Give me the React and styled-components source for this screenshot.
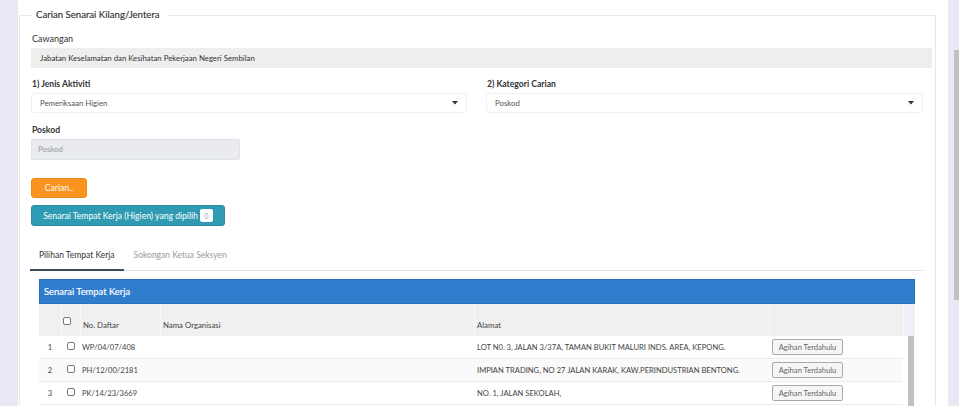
import styled, { createGlobalStyle } from "styled-components";

const GlobalStyle = createGlobalStyle`
    * { box-sizing: border-box; }
    body {
        margin: 0;
        background: #e8e9f5;
        font-family: Lato, "Noto Sans", sans-serif;
        color: #333;
    }
`;

const Page = styled.div`
    display: flex;
    height: 406px;
    overflow: hidden;
`;
const Card = styled.main`
    margin-left: 18px;
    width: 930px;
    background: #fff;
    padding-top: 8px;
`;
const PageRail = styled.div`
    flex: 1;
    display: flex;
    justify-content: flex-end;
`;
const PageThumb = styled.div`
    width: 5px;
    height: 250px;
    margin-top: 50px;
    background: #c1c1c1;
`;
const Fieldset = styled.fieldset`
    margin: 0 0 0 1px;
    width: 917px;
    min-width: 0;
    border: 1px solid #e9e9e9;
    padding: 0 2px 0 11px;
`;
const Legend = styled.legend`
    margin-left: 1px;
    padding: 0 7px 0 4px;
    font-size: 9.6px;
    line-height: 14px;
    color: #333;
    -webkit-text-stroke: 0.15px #333;
`;
const Label = styled.div`
    font-size: ${p => p.$bold ? 8.6 : 9}px;
    line-height: 12px;
    font-weight: ${p => p.$bold ? 700 : 400};
    color: #333;
    margin: ${p => p.$top || 0}px 0 3px 1px;
`;
const ReadOnly = styled.div`
    width: 901px;
    height: 20px;
    background: #eeeeee;
    font-size: 7.8px;
    line-height: 20px;
    padding-left: 9px;
    color: #333;
`;
const Row = styled.div`
    display: flex;
    gap: 19px;
`;
const Col = styled.div`
    width: ${p => p.$w}px;
`;
const Select = styled.div`
    height: 20px;
    border: 1px solid #f0f0f0;
    border-radius: 3px;
    display: flex;
    align-items: center;
    justify-content: space-between;
    padding: 0 8px 0 8px;
    font-size: 7.8px;
    color: #555;
    background: #fff;
`;
const PostInput = styled.div`
    width: 209px;
    height: 21px;
    background: #e9ebee;
    border: 1px solid #dfe2e6;
    border-radius: 2px;
    font-size: 7.8px;
    line-height: 19px;
    padding-left: 6px;
    color: #9a9a9a;
`;
const Button = styled.div`
    display: inline-flex;
    align-items: center;
    justify-content: center;
    gap: 2px;
    height: ${p => p.$h}px;
    width: ${p => p.$w}px;
    margin-top: ${p => p.$top}px;
    background: ${p => p.$bg};
    border: 1px solid ${p => p.$border};
    border-radius: 3px;
    color: #fff;
    font-size: 8.6px;
`;
const Stack = styled.div`
    display: flex;
    flex-direction: column;
    align-items: flex-start;
`;
const Badge = styled.span`
    background: #fff;
    color: #8aaab8;
    font-size: 7px;
    width: 13px;
    height: 13px;
    border-radius: 2px;
    display: inline-flex;
    align-items: center;
    justify-content: center;
`;
const Tabs = styled.div`
    display: flex;
    width: 893px;
    margin: 15px 0 0 -1px;
    border-bottom: 1px solid #e3e3e3;
`;
const Tab = styled.div`
    padding: 8px 9px 7px ${p => p.$active ? 9 : 10}px;
    font-size: 8.5px;
    line-height: 13px;
    color: ${p => p.$active ? "#333" : "#9a9a9a"};
    border-bottom: 2px solid ${p => p.$active ? "#3b4a5c" : "transparent"};
    margin-bottom: -1px;
`;
const Panel = styled.section`
    margin: 8px 0 0 8px;
    width: 876px;
`;
const PanelHead = styled.div`
    height: 25px;
    background: #2f7dcd;
    border: 1px solid #2a70bd;
    color: #fff;
    font-size: 9.4px;
    line-height: 23px;
    padding-left: 4px;
    -webkit-text-stroke: 0.15px #fff;
`;
const Grid = styled.div`
    display: grid;
    grid-template-columns: 22px 19px 80px 314px 295px 134px ${p => p.$gutter ? "12px" : ""};
`;
const HeadRow = styled(Grid)`
    height: 32px;
    background: #f0f0f0;
`;
const HeadCell = styled.div`
    border-left: 1px solid ${p => p.$first ? "transparent" : "#f8f8f8"};
    font-size: 7.8px;
    color: #444;
    padding: ${p => p.$check ? "13px 0 0 1px" : "0 0 6px 2px"};
    display: flex;
    align-items: ${p => p.$check ? "flex-start" : "flex-end"};
    background: ${p => p.$gutter ? "#eef2f7" : "transparent"};
`;
const Body = styled.div`
    display: flex;
`;
const Rows = styled.div`
    width: 864px;
`;
const BodyRow = styled(Grid)`
    height: 23px;
    align-items: center;
    border-bottom: 1px solid #ececec;
    background: ${p => p.$striped ? "#fafafa" : "#fff"};
    font-size: 7.6px;
    color: #444;
`;
const Cell = styled.div`
    padding-left: ${p => p.$pad ?? 3}px;
    text-align: ${p => p.$center ? "center" : "left"};
    white-space: nowrap;
`;
const Check = styled.span`
    display: inline-block;
    width: 8px;
    height: 8px;
    border: 1px solid #777;
    border-radius: 2px;
    background: #fff;
`;
const RowButton = styled.div`
    width: 71px;
    height: 16px;
    margin-left: 3px;
    border: 1px solid #a9a9a9;
    border-radius: 2px;
    background: #f6f6f6;
    color: #666;
    font-size: 7.6px;
    line-height: 14px;
    text-align: center;
`;
const BodyRail = styled.div`
    width: 12px;
    display: flex;
    justify-content: flex-end;
    padding-right: 1px;
`;
const BodyThumb = styled.div`
    width: 6px;
    height: 80px;
    background: #c1c1c1;
`;

const Caret = () => (
    <svg width="6" height="4" viewBox="0 0 6 4"><polygon points="0,0 6,0 3,3.5" fill="#333" /></svg>
);

const rows = [
    { no: "WP/04/07/408", alamat: "LOT N0. 3, JALAN 3/37A, TAMAN BUKIT MALURI INDS. AREA, KEPONG." },
    { no: "PH/12/00/2181", alamat: "IMPIAN TRADING, NO 27 JALAN KARAK, KAW.PERINDUSTRIAN BENTONG." },
    { no: "PK/14/23/3669", alamat: "NO. 1, JALAN SEKOLAH," },
];

export default function App() {
    return (
        <>
            <GlobalStyle />
            <Page>
                <Card>
                    <Fieldset>
                        <Legend>Carian Senarai Kilang/Jentera</Legend>
                        <Label $top={11}>Cawangan</Label>
                        <ReadOnly>Jabatan Keselamatan dan Kesihatan Pekerjaan Negeri Sembilan</ReadOnly>
                        <Row>
                            <Col $w={436}>
                                <Label $bold $top={10}>1) Jenis Aktiviti</Label>
                                <Select>Pemeriksaan Higien<Caret /></Select>
                            </Col>
                            <Col $w={437}>
                                <Label $bold $top={10}>2) Kategori Carian</Label>
                                <Select>Poskod<Caret /></Select>
                            </Col>
                        </Row>
                        <Label $bold $top={11}>Poskod</Label>
                        <PostInput>Poskod</PostInput>
                        <Stack>
                            <Button $w={56} $h={20} $top={18} $bg="#fb931f" $border="#f28a16">Carian..</Button>
                            <Button $w={194} $h={21} $top={7} $bg="#2e9bb3" $border="#2a8ea5">
                                Senarai Tempat Kerja (Higien) yang dipilih <Badge>0</Badge>
                            </Button>
                        </Stack>
                        <Tabs>
                            <Tab $active>Pilihan Tempat Kerja</Tab>
                            <Tab>Sokongan Ketua Seksyen</Tab>
                        </Tabs>
                        <Panel>
                            <PanelHead>Senarai Tempat Kerja</PanelHead>
                            <HeadRow $gutter>
                                <HeadCell $first />
                                <HeadCell $check><Check /></HeadCell>
                                <HeadCell>No. Daftar</HeadCell>
                                <HeadCell>Nama Organisasi</HeadCell>
                                <HeadCell>Alamat</HeadCell>
                                <HeadCell />
                                <HeadCell $gutter />
                            </HeadRow>
                            <Body>
                                <Rows>
                                    {rows.map((r, i) => (
                                        <BodyRow key={r.no} $striped={i === 1}>
                                            <Cell $center $pad={0}>{i + 1}</Cell>
                                            <Cell $pad={6}><Check /></Cell>
                                            <Cell $pad={2}>{r.no}</Cell>
                                            <Cell />
                                            <Cell>{r.alamat}</Cell>
                                            <Cell $pad={0}><RowButton>Agihan Terdahulu</RowButton></Cell>
                                        </BodyRow>
                                    ))}
                                </Rows>
                                <BodyRail><BodyThumb /></BodyRail>
                            </Body>
                        </Panel>
                    </Fieldset>
                </Card>
                <PageRail><PageThumb /></PageRail>
            </Page>
        </>
    );
}
